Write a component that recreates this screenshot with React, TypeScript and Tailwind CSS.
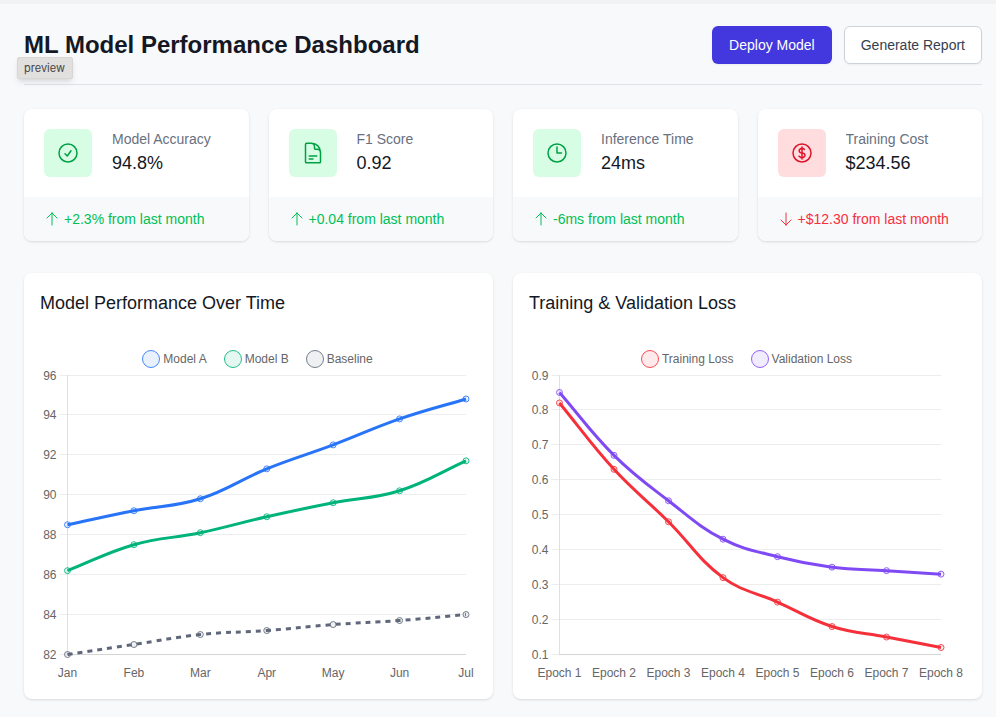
import { useLayoutEffect, useRef, useState } from "react";
import type { IconType } from "react-icons";
import {
  HiOutlineArrowDown,
  HiOutlineArrowUp,
  HiOutlineCheckCircle,
  HiOutlineClock,
  HiOutlineCurrencyDollar,
  HiOutlineDocumentText,
} from "react-icons/hi2";

type Metric = {
  label: string;
  value: string;
  change: string;
  icon: IconType;
  good: boolean;
};

type Series = {
  name: string;
  color: string;
  values: number[];
  dashed?: boolean;
};

type ChartProps = {
  title: string;
  labels: string[];
  ticks: string[];
  series: Series[];
  insetLeft: number;
  insetRight: number;
};

type Point = { x: number; y: number };

const metrics: Metric[] = [
  { label: "Model Accuracy", value: "94.8%", change: "+2.3% from last month", icon: HiOutlineCheckCircle, good: true },
  { label: "F1 Score", value: "0.92", change: "+0.04 from last month", icon: HiOutlineDocumentText, good: true },
  { label: "Inference Time", value: "24ms", change: "-6ms from last month", icon: HiOutlineClock, good: true },
  { label: "Training Cost", value: "$234.56", change: "+$12.30 from last month", icon: HiOutlineCurrencyDollar, good: false },
];

const performance: ChartProps = {
  title: "Model Performance Over Time",
  labels: ["Jan", "Feb", "Mar", "Apr", "May", "Jun", "Jul"],
  ticks: ["82", "84", "86", "88", "90", "92", "94", "96"],
  series: [
    { name: "Model A", color: "#2874f8", values: [88.5, 89.2, 89.8, 91.3, 92.5, 93.8, 94.8] },
    { name: "Model B", color: "#00b37a", values: [86.2, 87.5, 88.1, 88.9, 89.6, 90.2, 91.7] },
    { name: "Baseline", color: "#5f687a", values: [82, 82.5, 83, 83.2, 83.5, 83.7, 84], dashed: true },
  ],
  insetLeft: 27,
  insetRight: 11,
};

const loss: ChartProps = {
  title: "Training & Validation Loss",
  labels: ["Epoch 1", "Epoch 2", "Epoch 3", "Epoch 4", "Epoch 5", "Epoch 6", "Epoch 7", "Epoch 8"],
  ticks: ["0.1", "0.2", "0.3", "0.4", "0.5", "0.6", "0.7", "0.8", "0.9"],
  series: [
    { name: "Training Loss", color: "#f5303a", values: [0.82, 0.63, 0.48, 0.32, 0.25, 0.18, 0.15, 0.12] },
    { name: "Validation Loss", color: "#7f4af4", values: [0.85, 0.67, 0.54, 0.43, 0.38, 0.35, 0.34, 0.33] },
  ],
  insetLeft: 30,
  insetRight: 25,
};

const PLOT_TOP = 6;
const PLOT_HEIGHT = 280;
const CHART_HEIGHT = 314;
const TENSION = 0.4;

// Cubic spline through the points, with handles weighted by neighbour distance.
function splinePath(points: Point[]): string {
  const handles = points.map((p, i) => {
    const prev = points[i - 1] ?? p;
    const next = points[i + 1] ?? p;
    const before = Math.hypot(p.x - prev.x, p.y - prev.y);
    const after = Math.hypot(next.x - p.x, next.y - p.y);
    const total = before + after || 1;
    const a = (TENSION * before) / total;
    const b = (TENSION * after) / total;
    return {
      inX: p.x - a * (next.x - prev.x),
      inY: p.y - a * (next.y - prev.y),
      outX: p.x + b * (next.x - prev.x),
      outY: p.y + b * (next.y - prev.y),
    };
  });
  return points
    .map((p, i) =>
      i === 0
        ? `M${p.x} ${p.y}`
        : `C${handles[i - 1].outX} ${handles[i - 1].outY} ${handles[i].inX} ${handles[i].inY} ${p.x} ${p.y}`,
    )
    .join(" ");
}

function MetricCard({ label, value, change, icon: Icon, good }: Metric) {
  const Arrow = good ? HiOutlineArrowUp : HiOutlineArrowDown;
  return (
    <article className="overflow-hidden rounded-lg bg-white shadow-sm">
      <div className="flex items-center gap-5 p-5">
        <div className={good ? "rounded-md bg-[#d7fde4] p-3 text-[#00a143]" : "rounded-md bg-[#ffdcde] p-3 text-[#e0122a]"}>
          <Icon className="size-6" aria-hidden />
        </div>
        <dl className="min-w-0 flex-1">
          <dt className="truncate text-sm text-[#69707f]">{label}</dt>
          <dd className="text-lg text-[#131824]">{value}</dd>
        </dl>
      </div>
      <div className={good ? "flex items-center gap-1 bg-[#f8f9fb] px-5 py-3 text-sm text-[#00bf54]" : "flex items-center gap-1 bg-[#f8f9fb] px-5 py-3 text-sm text-[#f5303a]"}>
        <Arrow className="size-4 shrink-0" aria-hidden />
        <span>{change}</span>
      </div>
    </article>
  );
}

function LineChart({ title, labels, ticks, series, insetLeft, insetRight }: ChartProps) {
  const box = useRef<HTMLDivElement>(null);
  const [width, setWidth] = useState(437);

  useLayoutEffect(() => {
    const node = box.current;
    if (!node) return;
    const measure = () => setWidth(Math.round(node.clientWidth));
    measure();
    const observer = new ResizeObserver(measure);
    observer.observe(node);
    return () => observer.disconnect();
  }, []);

  const low = Number(ticks[0]);
  const high = Number(ticks[ticks.length - 1]);
  const left = insetLeft + 0.5;
  const right = width - insetRight;
  const bottom = PLOT_TOP + PLOT_HEIGHT;
  const xAt = (i: number) => left + ((right - left) * i) / (labels.length - 1);
  const yAt = (v: number) => bottom - 0.5 - ((v - low) / (high - low)) * (PLOT_HEIGHT - 0.5);

  return (
    <section className="min-w-0 rounded-lg bg-white p-4 shadow-sm">
      <h2 className="text-lg text-[#131824]">{title}</h2>
      <ul className="mt-8 flex h-5 items-center justify-center gap-[17px] pr-0.5 text-xs text-[#666666]">
        {series.map((s) => (
          <li key={s.name} className="flex items-center gap-[3px]">
            <svg className="size-[18px] overflow-visible" viewBox="0 0 18 18" aria-hidden>
              <circle cx="9" cy="9" r="8.5" fill={s.color} fillOpacity="0.1" stroke={s.color} strokeOpacity="0.85" />
            </svg>
            {s.name}
          </li>
        ))}
      </ul>
      <div ref={box} className="w-full">
        <svg className="block w-full" height={CHART_HEIGHT} role="img" aria-label={title}>
          {ticks.map((t, i) => {
            const y = i === ticks.length - 1 ? PLOT_TOP + 0.5 : Math.round(yAt(Number(t))) - 0.5;
            return (
              <g key={t}>
                <line x1={left - 8} x2={right} y1={y} y2={y} stroke="#ededed" />
                <text x={left - 11} y={y + 4} textAnchor="end" fontSize="12" fill="#666666">
                  {t}
                </text>
              </g>
            );
          })}
          <line x1={left} x2={left} y1={PLOT_TOP} y2={bottom} stroke="#e0e0e0" />
          <line x1={left} x2={right} y1={bottom - 0.5} y2={bottom - 0.5} stroke="#d4d4d4" />
          {labels.map((l, i) => (
            <text key={l} x={xAt(i)} y={bottom + 22} textAnchor="middle" fontSize="12" fill="#666666">
              {l}
            </text>
          ))}
          {[...series].reverse().map((s) => {
            const points = s.values.map((v, i) => ({ x: xAt(i), y: yAt(v) }));
            return (
              <g key={s.name} stroke={s.color}>
                <path d={splinePath(points)} fill="none" strokeWidth="3" strokeDasharray={s.dashed ? "5 5" : undefined} />
                {points.map((p, i) => (
                  <circle key={i} cx={p.x} cy={p.y} r="3" fill={s.color} fillOpacity="0.1" strokeOpacity="0.85" />
                ))}
              </g>
            );
          })}
        </svg>
      </div>
    </section>
  );
}

export default function App() {
  return (
    <div className="min-h-screen border-t-4 border-[#f1f2f4] bg-[#f8f9fb] pt-[22px] pr-3.5 pb-4 pl-6 font-['Liberation_Sans',Arial,sans-serif]">
      <header className="relative flex flex-wrap items-center justify-between gap-3 border-b border-[#dfe2e8] pb-5">
        <h1 className="text-2xl font-bold text-[#131824]">ML Model Performance Dashboard</h1>
        <div className="flex gap-3">
          <button type="button" className="rounded-md border border-transparent bg-[#4338dd] px-4 py-2 text-sm text-white shadow-xs">
            Deploy Model
          </button>
          <button type="button" className="rounded-md border border-[#ced2d9] bg-white px-4 py-2 text-sm text-[#36404f] shadow-xs">
            Generate Report
          </button>
        </div>
        <span
          role="tooltip"
          className="absolute top-[31px] -left-[7px] rounded-xs border border-[#d8d7d6] bg-[#e2e0de] pr-[7px] pl-1.5 font-[Inter,sans-serif] text-[11px] leading-5 text-[#454545] shadow-md"
        >
          preview
        </span>
      </header>
      <main>
        <div className="mt-6 grid grid-cols-1 gap-5 sm:grid-cols-2 md:grid-cols-4">
          {metrics.map((m) => (
            <MetricCard key={m.label} {...m} />
          ))}
        </div>
        <div className="mt-8 grid grid-cols-1 gap-5 md:grid-cols-2">
          <LineChart {...performance} />
          <LineChart {...loss} />
        </div>
      </main>
    </div>
  );
}
